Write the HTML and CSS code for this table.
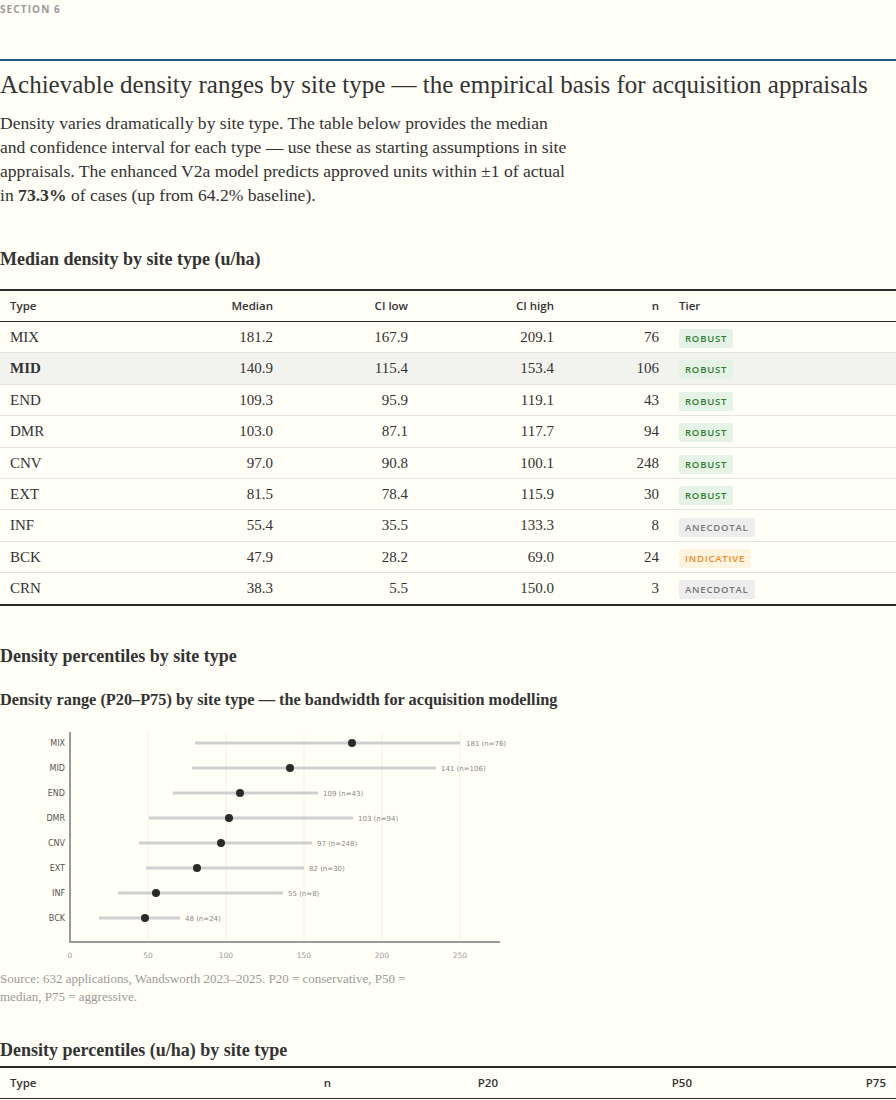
FILE: index.html
```html
<!DOCTYPE html>
<html lang="en">
<head>
<meta charset="utf-8">
<title>Section 6 — Achievable density ranges</title>
<link rel="stylesheet" href="styles.css">
</head>
<body>
<section class="section">
  <header class="section-head">
    <div class="eyebrow">SECTION 6</div>
  </header>
  <h1 class="title">Achievable density ranges by site type — the empirical basis for acquisition appraisals</h1>
  <p class="lede">Density varies dramatically by site type. The table below provides the median and confidence interval for each type — use these as starting assumptions in site appraisals. The enhanced V2a model predicts approved units within ±1 of actual in <strong>73.3%</strong> of cases (up from 64.2% baseline).</p>

  <h3 class="sub sub-first">Median density by site type (u/ha)</h3>
  <table class="data median-table">
    <thead>
      <tr>
        <th class="c-type">Type</th>
        <th class="num c-med">Median</th>
        <th class="num c-lo">CI low</th>
        <th class="num c-hi">CI high</th>
        <th class="num c-n">n</th>
        <th class="c-tier">Tier</th>
      </tr>
    </thead>
    <tbody>
      <tr><td>MIX</td><td class="num">181.2</td><td class="num">167.9</td><td class="num">209.1</td><td class="num">76</td><td><span class="badge robust">ROBUST</span></td></tr>
      <tr class="hl"><td>MID</td><td class="num">140.9</td><td class="num">115.4</td><td class="num">153.4</td><td class="num">106</td><td><span class="badge robust">ROBUST</span></td></tr>
      <tr><td>END</td><td class="num">109.3</td><td class="num">95.9</td><td class="num">119.1</td><td class="num">43</td><td><span class="badge robust">ROBUST</span></td></tr>
      <tr><td>DMR</td><td class="num">103.0</td><td class="num">87.1</td><td class="num">117.7</td><td class="num">94</td><td><span class="badge robust">ROBUST</span></td></tr>
      <tr><td>CNV</td><td class="num">97.0</td><td class="num">90.8</td><td class="num">100.1</td><td class="num">248</td><td><span class="badge robust">ROBUST</span></td></tr>
      <tr><td>EXT</td><td class="num">81.5</td><td class="num">78.4</td><td class="num">115.9</td><td class="num">30</td><td><span class="badge robust">ROBUST</span></td></tr>
      <tr><td>INF</td><td class="num">55.4</td><td class="num">35.5</td><td class="num">133.3</td><td class="num">8</td><td><span class="badge anecdotal">ANECDOTAL</span></td></tr>
      <tr><td>BCK</td><td class="num">47.9</td><td class="num">28.2</td><td class="num">69.0</td><td class="num">24</td><td><span class="badge indicative">INDICATIVE</span></td></tr>
      <tr><td>CRN</td><td class="num">38.3</td><td class="num">5.5</td><td class="num">150.0</td><td class="num">3</td><td><span class="badge anecdotal">ANECDOTAL</span></td></tr>
    </tbody>
  </table>

  <h3 class="sub sub-second">Density percentiles by site type</h3>
  <h4 class="chart-title">Density range (P20–P75) by site type — the bandwidth for acquisition modelling</h4>
  <figure class="chart">
    <svg class="chart-svg" width="520" height="236" viewBox="0 0 520 236">
      <g class="grid">
        <line x1="148" y1="3" x2="148" y2="211"/>
        <line x1="226" y1="3" x2="226" y2="211"/>
        <line x1="304" y1="3" x2="304" y2="211"/>
        <line x1="382" y1="3" x2="382" y2="211"/>
        <line x1="460" y1="3" x2="460" y2="211"/>
      </g>
      <g class="bars">
        <line x1="195" y1="13" x2="460" y2="13"/>
        <line x1="192" y1="38" x2="436" y2="38"/>
        <line x1="173" y1="63" x2="318" y2="63"/>
        <line x1="149" y1="88" x2="353" y2="88"/>
        <line x1="139" y1="113" x2="312" y2="113"/>
        <line x1="146" y1="138" x2="304" y2="138"/>
        <line x1="118" y1="163" x2="283" y2="163"/>
        <line x1="99" y1="188" x2="180" y2="188"/>
      </g>
      <g class="dots">
        <circle cx="352" cy="13" r="4"/>
        <circle cx="290" cy="38" r="4"/>
        <circle cx="240" cy="63" r="4"/>
        <circle cx="229" cy="88" r="4"/>
        <circle cx="221" cy="113" r="4"/>
        <circle cx="197" cy="138" r="4"/>
        <circle cx="156" cy="163" r="4"/>
        <circle cx="145" cy="188" r="4"/>
      </g>
      <g class="cat">
        <text x="65" y="16">MIX</text>
        <text x="65" y="41">MID</text>
        <text x="65" y="66">END</text>
        <text x="65" y="91">DMR</text>
        <text x="65" y="116">CNV</text>
        <text x="65" y="141">EXT</text>
        <text x="65" y="166">INF</text>
        <text x="65" y="191">BCK</text>
      </g>
      <g class="val">
        <text x="466" y="16">181 (n=76)</text>
        <text x="441" y="41">141 (n=106)</text>
        <text x="323" y="66">109 (n=43)</text>
        <text x="358" y="91">103 (n=94)</text>
        <text x="317" y="116">97 (n=248)</text>
        <text x="309" y="141">82 (n=30)</text>
        <text x="288" y="166">55 (n=8)</text>
        <text x="185" y="191">48 (n=24)</text>
      </g>
      <g class="axis">
        <line x1="70" y1="2" x2="70" y2="213"/>
        <line x1="69" y1="212" x2="500" y2="212"/>
      </g>
      <g class="tick">
        <text x="70" y="228">0</text>
        <text x="148" y="228">50</text>
        <text x="226" y="228">100</text>
        <text x="304" y="228">150</text>
        <text x="382" y="228">200</text>
        <text x="460" y="228">250</text>
      </g>
    </svg>
    <figcaption class="caption">Source: 632 applications, Wandsworth 2023–2025. P20 = conservative, P50 = median, P75 = aggressive.</figcaption>
  </figure>

  <h3 class="sub sub-third">Density percentiles (u/ha) by site type</h3>
  <table class="data pct-table">
    <thead>
      <tr>
        <th class="p-type">Type</th>
        <th class="num p-n">n</th>
        <th class="num p-20">P20</th>
        <th class="num p-50">P50</th>
        <th class="num p-75">P75</th>
      </tr>
    </thead>
  </table>
</section>
</body>
</html>
```

FILE: styles.css
```css
html, body {
  margin: 0;
  padding: 0;
  background: #fffef7;
}

body {
  font-family: "Liberation Serif", "DejaVu Serif", serif;
  color: #333;
}

.section {
  width: 896px;
}

.section-head {
  padding-top: 3px;
  height: 56px;
  border-bottom: 2px solid #2b5a78;
}

.eyebrow {
  font-family: "Open Sans", "Noto Sans", sans-serif;
  font-size: 10px;
  line-height: 12px;
  font-weight: 700;
  letter-spacing: 1.1px;
  color: #9a9a9a;
}

.title {
  margin: 10px 0 0;
  font-size: 25px;
  line-height: 28px;
  font-weight: 400;
  color: #333;
}

.lede {
  margin: 12px 0 0;
  max-width: 568px;
  font-size: 17.6px;
  line-height: 24px;
  color: #333;
}

.lede strong {
  font-weight: 700;
}

.sub {
  margin: 0;
  font-size: 18px;
  line-height: 20px;
  font-weight: 700;
  color: #333;
}

.sub-first { margin-top: 42px; }
.sub-second { margin-top: 40px; }
.sub-third { margin-top: 34px; }

.chart-title {
  margin: 24px 0 0;
  font-size: 16.3px;
  line-height: 20px;
  font-weight: 700;
  color: #333;
}

.data {
  width: 896px;
  border-collapse: collapse;
  border-top: 2px solid #2a2a2a;
  table-layout: fixed;
}

.median-table {
  margin-top: 20px;
  border-bottom: 2px solid #2a2a2a;
}

.pct-table {
  margin-top: 6px;
}

.data th {
  font-family: "Open Sans", "Noto Sans", sans-serif;
  font-size: 11.5px;
  font-weight: 600;
  color: #333;
  text-align: left;
  padding: 0 10px;
  line-height: 30px;
  border-bottom: 1px solid #2a2a2a;
}

.data td {
  font-size: 15px;
  line-height: 30.4px;
  padding: 0 10px;
  border-bottom: 1px solid #e4e4e0;
  color: #333;
}

.data tbody tr:last-child td {
  border-bottom: none;
}

.data .num {
  text-align: right;
}

.data tr.hl td {
  background: #f2f3ef;
}

.data tr.hl td:first-child {
  font-weight: 700;
}

.c-type { width: 110px; }
.c-med { width: 133px; }
.c-lo { width: 115px; }
.c-hi { width: 126px; }
.c-n { width: 85px; }
.c-tier { width: auto; }

.p-type { width: 180px; }
.p-n { width: 121px; }
.p-20 { width: 147px; }
.p-50 { width: 174px; }
.p-75 { width: auto; }

.badge {
  display: inline-block;
  font-family: "Open Sans", "Noto Sans", sans-serif;
  font-size: 9.5px;
  line-height: 19px;
  font-weight: 600;
  letter-spacing: 0.8px;
  padding: 0 6px;
  border-radius: 2px;
  vertical-align: middle;
}

.badge.robust {
  background: #e5f3e7;
  color: #2e7d32;
}

.badge.anecdotal {
  background: #ededee;
  color: #777;
}

.badge.indicative {
  background: #fff4df;
  color: #f08a24;
}

.chart {
  margin: 20px 0 0;
}

.chart-svg {
  display: block;
}

.grid line {
  stroke: #f1f0ea;
  stroke-width: 1;
}

.bars line {
  stroke: #cfcfcf;
  stroke-width: 3;
}

.dots circle {
  fill: #2b2b2b;
}

.axis line {
  stroke: #9a9a9a;
  stroke-width: 2;
}

.cat text {
  font-family: "DejaVu Sans", sans-serif;
  font-size: 8px;
  fill: #555;
  text-anchor: end;
}

.val text {
  font-family: "DejaVu Sans", sans-serif;
  font-size: 7px;
  fill: #888;
}

.tick text {
  font-family: "DejaVu Sans", sans-serif;
  font-size: 7.5px;
  fill: #999;
  text-anchor: middle;
}

.caption {
  margin-top: 4px;
  max-width: 420px;
  font-size: 13px;
  line-height: 18px;
  color: #9a9a9a;
}
```
